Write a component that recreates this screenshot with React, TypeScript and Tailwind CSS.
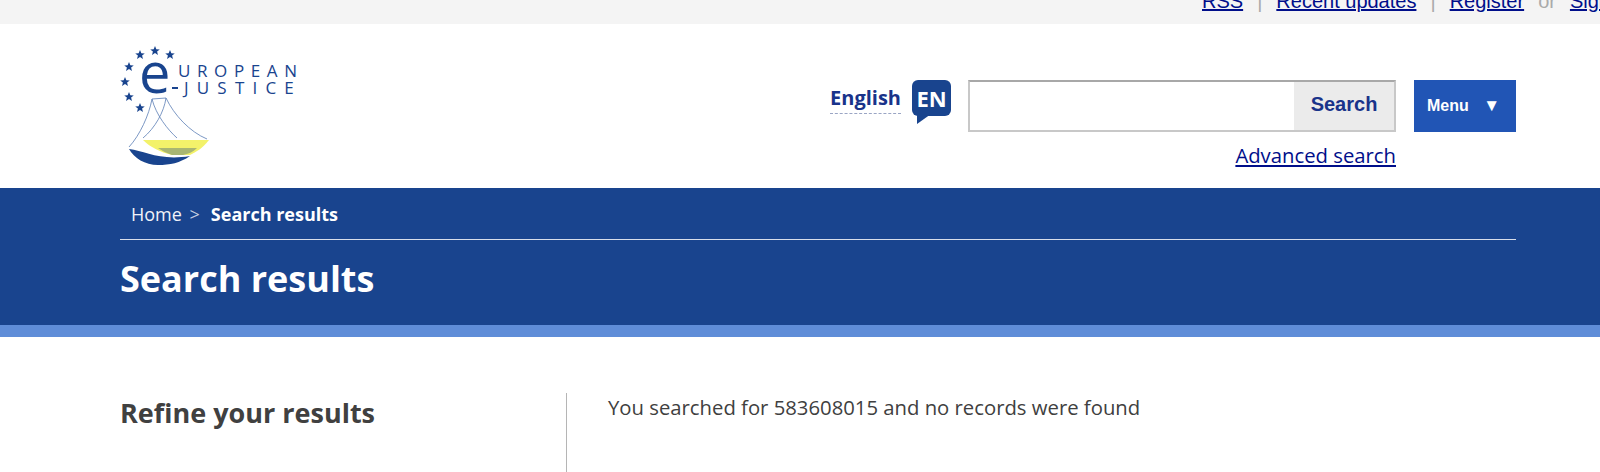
import React from "react";

const openSans = "font-['Open_Sans',sans-serif]";
const arial = "font-['Liberation_Sans',Arial,sans-serif]";

const Star = ({ x, y }: { x: number; y: number }) => (
  <polygon
    transform={`translate(${x} ${y}) scale(5)`}
    points="0,-1 0.27,-0.33 0.95,-0.31 0.42,0.12 0.59,0.81 0,0.42 -0.59,0.81 -0.42,0.12 -0.95,-0.31 -0.27,-0.33"
    fill="#19448e"
  />
);

// viewBox uses page coordinates so the drawing lines up with the reference
const Logo = () => (
  <svg width="190" height="125" viewBox="120 44 190 125" className="block">
    {[
      [140, 55],
      [155, 51],
      [170, 55],
      [129, 67],
      [125, 82],
      [129, 97],
      [140, 108],
    ].map(([x, y]) => (
      <Star key={`${x}-${y}`} x={x} y={y} />
    ))}
    <text x="139" y="93" fontFamily="'Open Sans', sans-serif" fontSize="56" fontWeight="500" fill="#19448e">
      e
    </text>
    <text x="178" y="77" fontFamily="'Open Sans', sans-serif" fontSize="17" letterSpacing="6.6" fill="#19448e">
      UROPEAN
    </text>
    <rect x="172" y="87" width="6" height="2" fill="#19448e" />
    <text x="184" y="94" fontFamily="'Open Sans', sans-serif" fontSize="17" letterSpacing="8.2" fill="#19448e">
      JUSTICE
    </text>
    <path
      d="M129 147 C140 135 149 115 152 99 L166 98 C174 115 190 132 207 139 M166 98 C164 112 155 128 143 138 M152 99 C156 115 168 130 177 138"
      fill="none"
      stroke="#5b7db5"
      strokeWidth="0.8"
    />
    <path d="M143 140 L209 140 C203 148 196 152 190 155 L172 155 C160 152 150 147 143 140 Z" fill="#f3f26a" />
    <path d="M158 148 L197 148 C193 152 188 154 183 155 L172 155 C167 153 162 151 158 148 Z" fill="#a9b672" />
    <path d="M129 149 C145 151 160 161 190 156 C180 163 170 165 158 165 C145 165 134 158 129 149 Z" fill="#19448e" />
  </svg>
);

const App: React.FC = () => {
  return (
    <div className="h-[472px] w-[1600px] overflow-hidden bg-white">
      {/* Top bar */}
      <div className={`flex h-6 items-end overflow-hidden bg-[#f4f4f4] pl-[1202px] ${arial}`}>
        <div className="flex shrink-0 gap-[14px] whitespace-nowrap pb-[11px] text-[20px] leading-[24px] text-[#aaa]">
          <a className="text-[#000e8a] underline">RSS</a>
          <span>|</span>
          <a className="text-[#000e8a] underline">Recent updates</a>
          <span>|</span>
          <a className="text-[#000e8a] underline">Register</a>
          <span>or</span>
          <a className="text-[#000e8a] underline">Sign in</a>
        </div>
      </div>

      {/* Header */}
      <div className="flex h-[164px] pl-[120px]">
        <div className="pt-5">
          <Logo />
        </div>
        <div className="ml-auto mr-[84px] flex items-start pt-14">
          <div className={`mt-[3px] border-b border-dashed border-[#9aa5c4] text-[20px] font-bold leading-[30px] text-[#19338a] ${openSans}`}>
            English
          </div>
          <div className="relative ml-[11px] flex h-[36px] w-[39px] items-center justify-center rounded-[6px] bg-[#19448e]">
            <span className={`text-[22px] font-bold leading-none text-white ${openSans}`}>EN</span>
            <span className="absolute left-[5px] top-[34px] h-0 w-0 border-r-[14px] border-t-[10px] border-r-transparent border-t-[#19448e]" />
          </div>
          <div className="ml-[17px] w-[428px]">
            <div className="flex h-[52px] border-2 border-[#c8c8c8] border-t-[#a8a8a8]">
              <div className="flex-1 bg-white" />
              <div className={`flex w-[100px] items-center justify-center bg-[#ebebeb] pb-[4px] text-[20px] font-bold text-[#19338a] ${arial}`}>
                Search
              </div>
            </div>
            <div className={`mt-[9px] text-right text-[20.3px] leading-[28px] text-[#000e8a] underline ${openSans}`}>
              Advanced search
            </div>
          </div>
          <div className={`ml-[18px] flex h-[52px] w-[102px] items-center justify-between bg-[#2155b5] pl-[13px] pr-[16px] text-[16px] font-bold text-white ${arial}`}>
            <span>Menu</span>
            <span className="text-[17px]">▼</span>
          </div>
        </div>
      </div>

      {/* Blue band */}
      <div className={`h-[149px] border-b-[12px] border-[#5f8dd8] bg-[#19448e] pl-[120px] ${openSans}`}>
        <div className="w-[1396px] border-b border-[#d8deea] pl-[11px] pb-[11px] pt-[13px] text-[18px] leading-[27px] text-[#f0f2f8]">
          Home <span className="ml-[3px] text-[#c3cde2]">&gt;</span>
          <span className="ml-[11px] font-bold text-white">Search results</span>
        </div>
        <h1 className="mt-[16px] text-[36px] font-bold leading-[46px] text-white">Search results</h1>
      </div>

      {/* Results */}
      <div className={`flex pl-[120px] pt-[56px] text-[#404040] ${openSans}`}>
        <div className="w-[446px] pt-[1px] text-[27px] font-bold leading-[38px]">Refine your results</div>
        <div className="h-[79px] border-l border-[#b5b5b5] pl-[41px] text-[20.3px] leading-[28px]">
          You searched for 583608015 and no records were found
        </div>
      </div>
    </div>
  );
};

export default App;
